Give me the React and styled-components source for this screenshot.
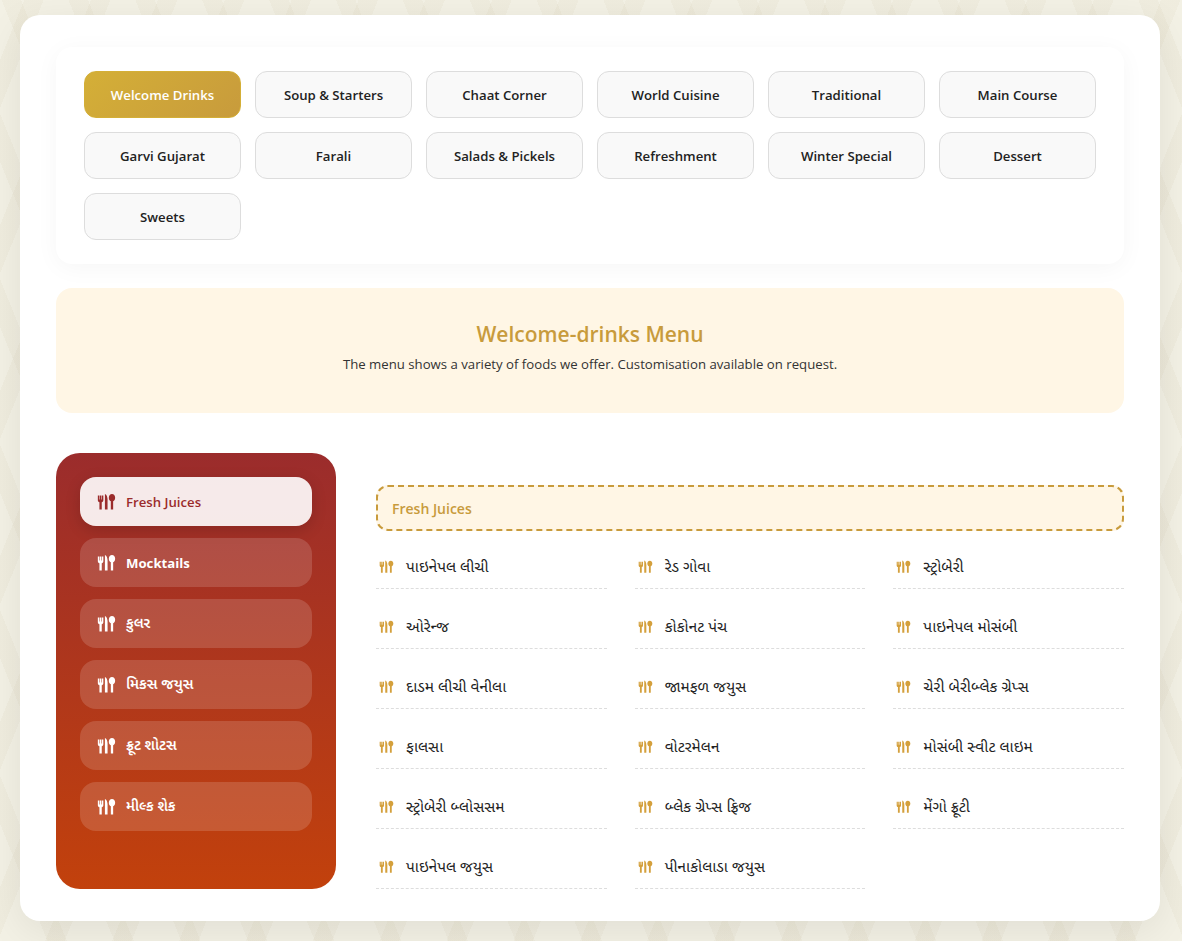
import React from "react";
import styled, { createGlobalStyle } from "styled-components";

const GlobalStyle = createGlobalStyle`
  * {
    box-sizing: border-box;
  }
  html,
  body {
    margin: 0;
    padding: 0;
  }
  body {
    font-family: "Open Sans", "Noto Sans", "Noto Sans Gujarati", "Lohit Gujarati", sans-serif;
    color: #222;
    background-color: #f1eee0;
  }
`;

const categories = [
  "Welcome Drinks",
  "Soup & Starters",
  "Chaat Corner",
  "World Cuisine",
  "Traditional",
  "Main Course",
  "Garvi Gujarat",
  "Farali",
  "Salads & Pickels",
  "Refreshment",
  "Winter Special",
  "Dessert",
  "Sweets",
];

const sideItems = [
  { name: "Fresh Juices", latin: true },
  { name: "Mocktails", latin: true },
  { name: "કુલર" },
  { name: "મિકસ જયુસ" },
  { name: "ફ્રૂટ શોટસ" },
  { name: "મીલ્ક શેક" },
];

const dishes = [
  "પાઇનેપલ લીચી",
  "રેડ ગોવા",
  "સ્ટ્રોબેરી",
  "ઓરેન્જ",
  "કોકોનટ પંચ",
  "પાઇનેપલ મોસંબી",
  "દાડમ લીચી વેનીલા",
  "જામફળ જયુસ",
  "ચેરી બેરીબ્લેક ગ્રેપ્સ",
  "ફાલસા",
  "વોટરમેલન",
  "મોસંબી સ્વીટ લાઇમ",
  "સ્ટ્રોબેરી બ્લોસસમ",
  "બ્લેક ગ્રેપ્સ ફ્રિજ",
  "મેંગો ફ્રૂટી",
  "પાઇનેપલ જયુસ",
  "પીનાકોલાડા જયુસ",
];

function Utensils({ size = 18 }) {
  return (
    <svg width={size} height={size} viewBox="0 0 18 18" fill="currentColor" aria-hidden="true">
      <path d="M.8 3.200h1.400v3.800h.5V3.200h1.400v3.800h.5V3.200H6v4.600c0 1.100-.6 1.700-1.500 1.900V16.500H2.300V9.700C1.400 9.500.8 8.900.8 7.800z" />
      <path d="M7.500 1.800c1.700.5 2.500 2.800 2.500 5.800v8.900H7.500z" />
      <path d="M14.200 2c1.700 0 3 1.500 3 3.500 0 1.700-.8 2.900-1.900 3.300v7.700h-2.200V8.800c-1.100-.4-1.900-1.600-1.900-3.300 0-2 1.300-3.500 3-3.500z" />
    </svg>
  );
}

export default function App() {
  return (
    <Page>
      <GlobalStyle />
      <Card>
        <TabPanel>
          {categories.map((name, i) => (
            <TabButton key={name} $active={i === 0}>
              {name}
            </TabButton>
          ))}
        </TabPanel>

        <Banner>
          <BannerTitle>Welcome-drinks Menu</BannerTitle>
          <BannerText>The menu shows a variety of foods we offer. Customisation available on request.</BannerText>
        </Banner>

        <MenuArea>
          <Sidebar>
            {sideItems.map((item, i) => (
              <SideItem key={item.name} $active={i === 0} $latin={item.latin}>
                <Utensils size={19} />
                <span>{item.name}</span>
              </SideItem>
            ))}
          </Sidebar>

          <Content>
            <SectionHead>Fresh Juices</SectionHead>
            <DishGrid>
              {dishes.map((name) => (
                <Dish key={name}>
                  <DishIcon>
                    <Utensils size={15} />
                  </DishIcon>
                  {name}
                </Dish>
              ))}
            </DishGrid>
          </Content>
        </MenuArea>
      </Card>
    </Page>
  );
}

const Page = styled.div`
  min-height: 941px;
  padding: 15px 22px 20px 20px;
  background-color: #f3f1e5;
  background-image:
    repeating-linear-gradient(68deg, transparent 0 44px, rgba(190, 175, 135, 0.07) 44px 62px),
    repeating-linear-gradient(-68deg, transparent 0 44px, rgba(190, 175, 135, 0.07) 44px 62px);
`;

const Card = styled.main`
  background: #fff;
  border-radius: 20px;
  padding: 32px 36px;
  box-shadow: 0 10px 40px rgba(0, 0, 0, 0.08);
`;

const TabPanel = styled.nav`
  display: grid;
  grid-template-columns: repeat(6, 157px);
  gap: 14px;
  padding: 24px 28px;
  background: #fff;
  border-radius: 16px;
  box-shadow: 0 4px 24px rgba(0, 0, 0, 0.04);
`;

const TabButton = styled.button`
  height: 47px;
  padding: 0;
  font-family: inherit;
  font-size: 13.2px;
  font-weight: 600;
  border-radius: 12px;
  color: ${(p) => (p.$active ? "#fff" : "#222")};
  border: 1px solid ${(p) => (p.$active ? "#d4af37" : "#ddd")};
  background: ${(p) => (p.$active ? "linear-gradient(135deg, #d4af37, #c89b3c)" : "#f9f9f9")};
`;

const Banner = styled.section`
  height: 125px;
  margin-top: 24px;
  padding-top: 32px;
  text-align: center;
  background: #fff6e5;
  border-radius: 16px;
`;

const BannerTitle = styled.h2`
  margin: 0;
  font-size: 21px;
  line-height: 28px;
  font-weight: 600;
  color: #c89b3c;
`;

const BannerText = styled.p`
  margin: 7px 0 0;
  font-size: 13.2px;
  line-height: 18px;
  color: #333;
`;

const MenuArea = styled.div`
  display: flex;
  gap: 40px;
  margin-top: 40px;
`;

const Sidebar = styled.aside`
  flex: 0 0 280px;
  height: 436px;
  display: flex;
  flex-direction: column;
  gap: 12px;
  padding: 24px;
  border-radius: 24px;
  background: linear-gradient(180deg, #9b2c2c, #c2410c);
`;

const SideItem = styled.div`
  display: flex;
  align-items: center;
  gap: 10px;
  height: 49px;
  padding: 0 17px;
  font-size: ${(p) => (p.$latin ? "13.2px" : "14.5px")};
  font-weight: ${(p) => (p.$active || !p.$latin ? 600 : 700)};
  border-radius: 16px;
  color: ${(p) => (p.$active ? "#9b2c2c" : "#fff")};
  background: ${(p) => (p.$active ? "rgba(255, 255, 255, 0.9)" : "rgba(255, 255, 255, 0.15)")};
  box-shadow: ${(p) => (p.$active ? "0 4px 15px rgba(0, 0, 0, 0.15)" : "none")};
`;

const Content = styled.section`
  flex: 1;
  padding-top: 32px;
`;

const SectionHead = styled.h3`
  margin: 0 0 10px;
  height: 46px;
  display: flex;
  align-items: center;
  padding: 0 14px;
  font-size: 14px;
  font-weight: 600;
  color: #c89b3c;
  background: #fff6e5;
  border: 2px dashed #c89b3c;
  border-radius: 12px;
`;

const DishGrid = styled.div`
  display: grid;
  grid-template-columns: repeat(3, 1fr);
  gap: 12px 28px;
`;

const Dish = styled.div`
  display: flex;
  align-items: center;
  height: 48px;
  padding-top: 4px;
  font-size: 15.5px;
  color: #222;
  border-bottom: 1px dashed #ddd;
`;

const DishIcon = styled.span`
  display: flex;
  width: 30px;
  padding-left: 3px;
  color: #d4a03c;
`;
